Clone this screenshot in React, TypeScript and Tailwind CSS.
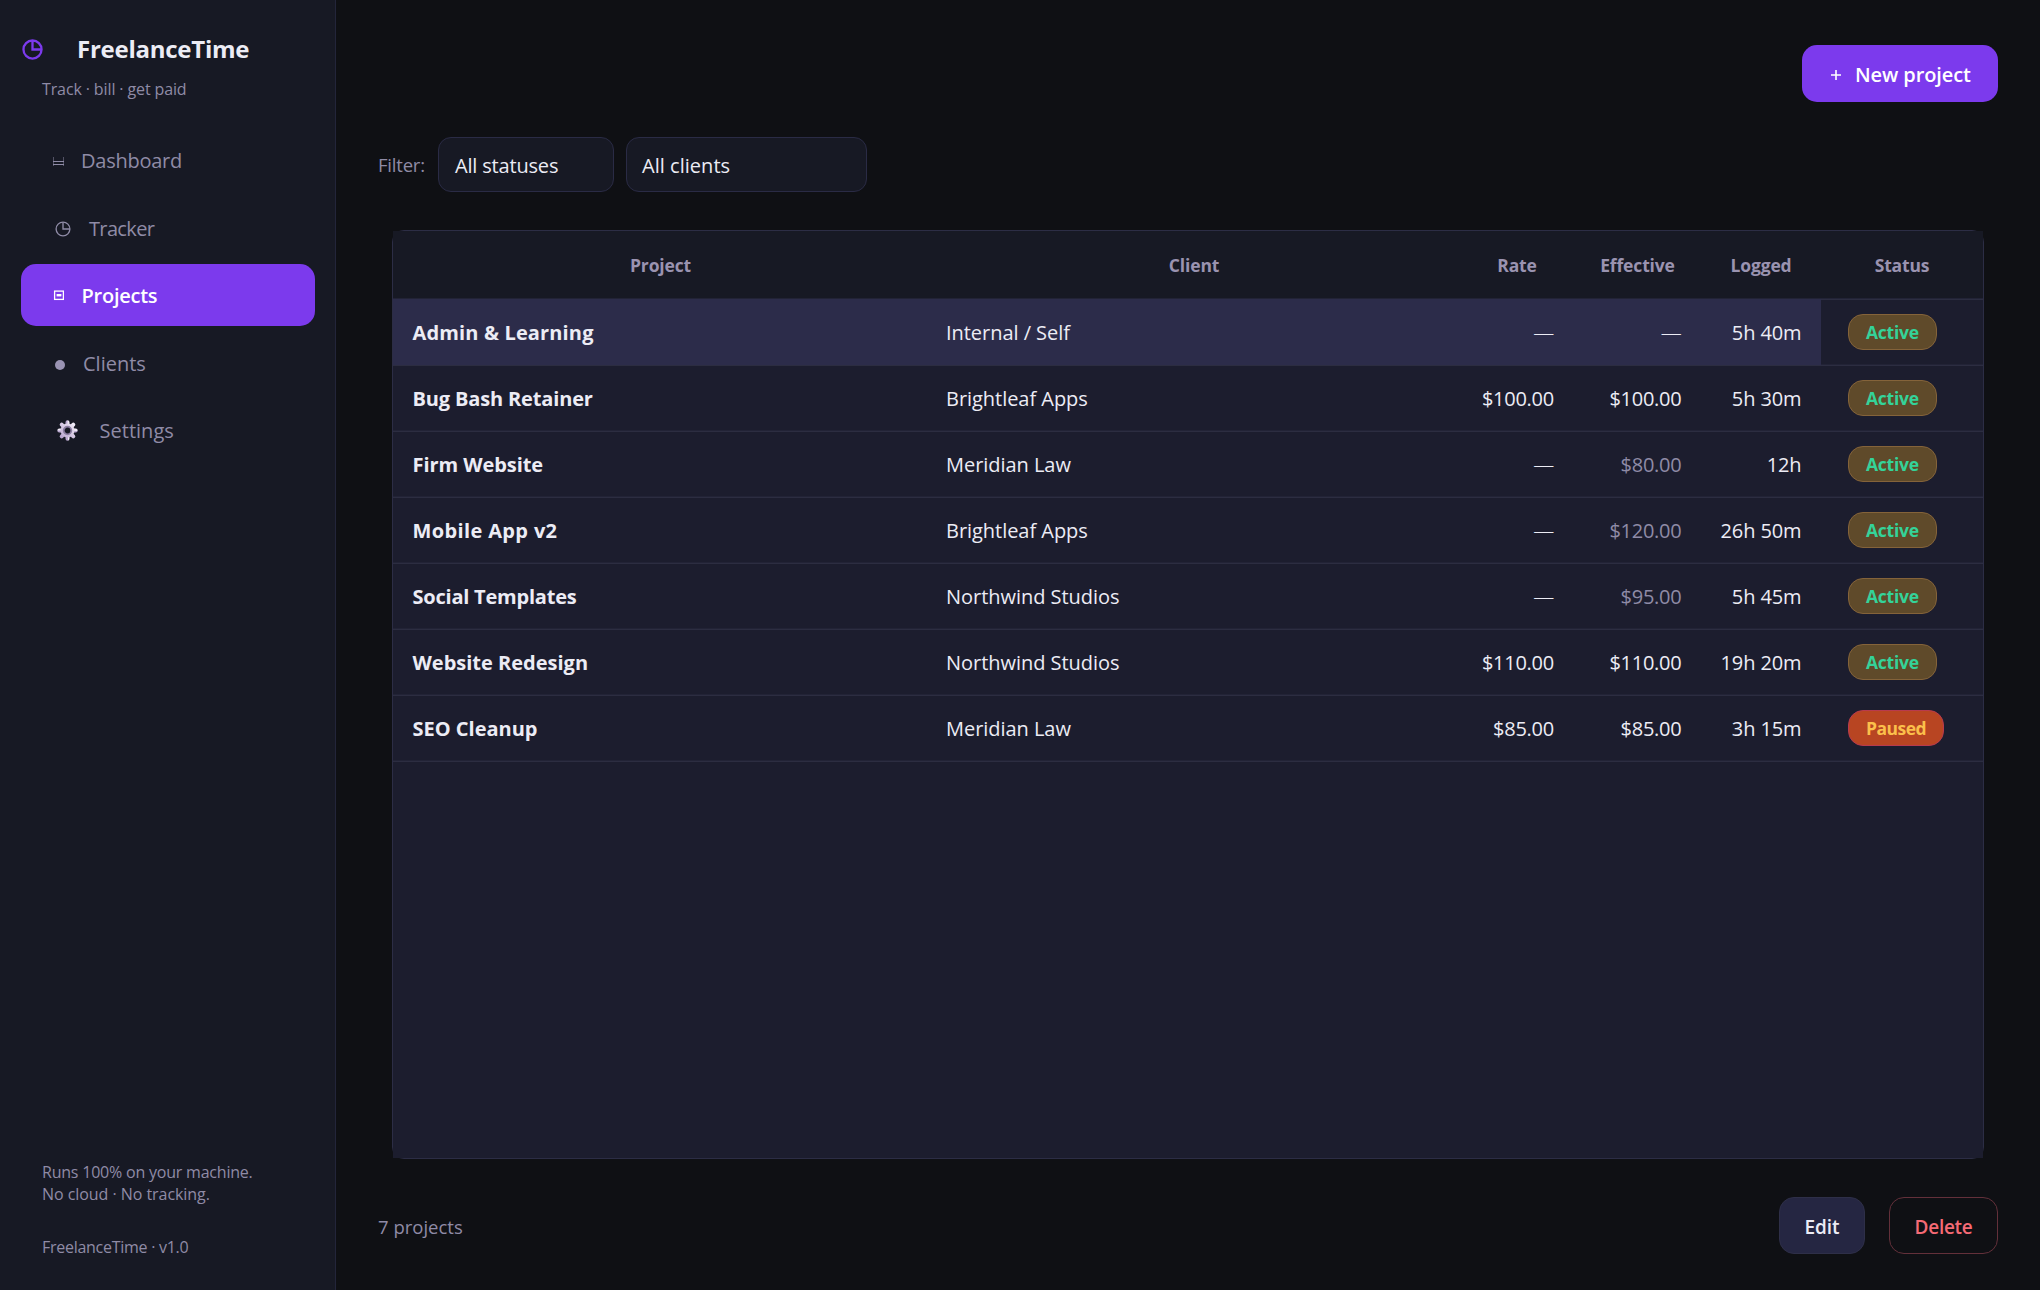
import type { ReactNode } from "react";
import clsx from "clsx";

type Status = "Active" | "Paused";

type Project = {
  name: string;
  tracking: string;
  client: string;
  rate: string;
  effective: string;
  inherited?: boolean;
  logged: string;
  status: Status;
};

const PROJECTS: Project[] = [
  { name: "Admin & Learning", tracking: "tracking-[0.15px]", client: "Internal / Self", rate: "—", effective: "—", logged: "5h 40m", status: "Active" },
  { name: "Bug Bash Retainer", tracking: "tracking-[-0.15px]", client: "Brightleaf Apps", rate: "$100.00", effective: "$100.00", logged: "5h 30m", status: "Active" },
  { name: "Firm Website", tracking: "tracking-[-0.06px]", client: "Meridian Law", rate: "—", effective: "$80.00", inherited: true, logged: "12h", status: "Active" },
  { name: "Mobile App v2", tracking: "tracking-[0.36px]", client: "Brightleaf Apps", rate: "—", effective: "$120.00", inherited: true, logged: "26h 50m", status: "Active" },
  { name: "Social Templates", tracking: "tracking-[-0.22px]", client: "Northwind Studios", rate: "—", effective: "$95.00", inherited: true, logged: "5h 45m", status: "Active" },
  { name: "Website Redesign", tracking: "tracking-normal", client: "Northwind Studios", rate: "$110.00", effective: "$110.00", logged: "19h 20m", status: "Active" },
  { name: "SEO Cleanup", tracking: "tracking-normal", client: "Meridian Law", rate: "$85.00", effective: "$85.00", logged: "3h 15m", status: "Paused" },
];

const COLUMNS = ["Project", "Client", "Rate", "Effective", "Logged", "Status"];

const GRID = "grid grid-cols-[535px_532px_114px_127px_120px_162px]";

const ClockIcon = ({ size, stroke }: { size: number; stroke: number }) => (
  <svg width={size} height={size} viewBox="0 0 20 20" fill="none" stroke="currentColor" strokeWidth={stroke}>
    <circle cx="10" cy="10" r="8.6" />
    <path d="M10 1.6V10H18.4" />
  </svg>
);

const DashboardIcon = () => (
  <svg width="11" height="11" viewBox="0 0 11 11" fill="currentColor" shapeRendering="crispEdges">
    <rect x="0" y="1" width="1" height="9" opacity="0.5" />
    <rect x="10" y="1" width="1" height="9" opacity="0.5" />
    <rect x="0" y="5" width="11" height="1" />
    <rect x="0" y="8" width="11" height="1" />
  </svg>
);

const ProjectsIcon = () => (
  <svg width="11" height="11" viewBox="0 0 11 11" fill="none" stroke="currentColor">
    <rect x="1.6" y="1.1" width="8.8" height="8.3" strokeWidth="1.3" />
    <path d="M3.6 5.2h4.8" strokeWidth="2.4" />
  </svg>
);

const GearIcon = () => (
  <svg width="21" height="21" viewBox="0 0 21 21">
    <defs>
      <linearGradient id="gear" x1="1" y1="0" x2="0" y2="1">
        <stop offset="0" stopColor="#f0eaf6" />
        <stop offset="1" stopColor="#b9a6cf" />
      </linearGradient>
    </defs>
    {/* teeth are nudged off-axis so the gradient box never collapses to zero */}
    <g stroke="url(#gear)" strokeWidth="4" strokeLinecap="round">
      <path d="M10.5 2.3L10.51 18.7" />
      <path d="M2.3 10.5L18.7 10.51" />
      <path d="M4.7 4.7L16.3 16.3" />
      <path d="M16.3 4.7L4.7 16.3" />
    </g>
    <circle cx="10.5" cy="10.5" r="7" fill="url(#gear)" />
    <circle cx="10.5" cy="10.5" r="3.8" fill="#171924" stroke="#8d7fa3" strokeWidth="1.8" />
  </svg>
);

const NavItem = ({ icon, label, active, className }: { icon: ReactNode; label: string; active?: boolean; className: string }) => (
  <a
    className={clsx(
      "flex h-[61.5px] items-center rounded-[15px] pl-8 text-[20px]",
      active ? "bg-[#7c3aed] font-semibold text-white" : "text-[#8f8ba6]",
      className
    )}
  >
    {icon}
    <span>{label}</span>
  </a>
);

const Sidebar = () => (
  <aside className="flex w-[336px] shrink-0 flex-col border-r border-[#23253a] bg-[#171924] pt-7 pr-5 pb-8 pl-[21px] text-[#8f8ba6]">
    <div className="flex h-[42px] items-center">
      <span className="pl-px text-[#7c3aed]">
        <ClockIcon size={21} stroke={2.2} />
      </span>
      <h1 className="ml-[34px] text-[24px] font-bold tracking-[-0.25px] text-[#ececf5]">FreelanceTime</h1>
    </div>
    <p className="mt-[7px] pl-[21px] text-[16px] leading-6 tracking-[-0.12px]">Track · bill · get paid</p>

    <nav className="mt-7 flex flex-col gap-1.5">
      <NavItem label="Dashboard" className="gap-[17px] pt-[3px] tracking-[-0.25px]" icon={<DashboardIcon />} />
      <NavItem label="Tracker" className="gap-[18.5px] pt-[3px] tracking-[-0.65px]" icon={<span className="pl-[1.5px]"><ClockIcon size={16} stroke={1.7} /></span>} />
      <NavItem label="Projects" active className="gap-[17.5px] pt-0.5 tracking-[-0.25px]" icon={<ProjectsIcon />} />
      <NavItem
        label="Clients"
        className="gap-[18px] pt-[3px] tracking-normal"
        icon={<span className="mt-[3px] ml-[2px] size-2.5 rounded-full bg-[#9a93b3]" />}
      />
      <NavItem label="Settings" className="gap-[21.5px] pt-0.5 tracking-[0.02px]" icon={<span className="pl-1"><GearIcon /></span>} />
    </nav>

    <div className="mt-auto pl-[21px] text-[16px] leading-[22px]">
      <p className="tracking-[-0.21px]">Runs 100% on your machine.</p>
      <p className="tracking-[-0.05px]">No cloud · No tracking.</p>
      <p className="mt-[31px] tracking-[-0.27px]">FreelanceTime · v1.0</p>
    </div>
  </aside>
);

const StatusBadge = ({ status }: { status: Status }) => (
  <span
    className={clsx(
      "flex h-9 items-center rounded-[15px] border pl-[17px] text-[17.5px] font-bold",
      status === "Active"
        ? "w-[88.5px] border-[#84633a] bg-[#5f4a2a] tracking-[-0.25px] text-[#34d399]"
        : "w-[96px] border-[#b83a4e] bg-[#b84522] tracking-[-0.5px] text-[#fbbf4b]"
    )}
  >
    <span className="pt-px">{status}</span>
  </span>
);

const Amount = ({ value }: { value: string }) =>
  value === "—" ? <span className="text-[21px] font-light">—</span> : <span>{value}</span>;

const ProjectRow = ({ project, selected }: { project: Project; selected: boolean }) => {
  const cell = clsx(
    "flex h-[66px] items-center border-y pt-0.5",
    selected ? "border-[#2c2c4a] bg-[#2c2c4a]" : "border-t-[#2c2d41] border-b-[#222336]"
  );

  return (
    <div className={clsx(GRID, "text-[20px] text-[#ececf5]")}>
      <div className={clsx(cell, "pl-[19.5px] font-bold", project.tracking)}>{project.name}</div>
      <div className={clsx(cell, "pl-[18px] tracking-[-0.04px]")}>{project.client}</div>
      <div className={clsx(cell, "justify-end pr-5 tracking-[-0.25px]")}>
        <Amount value={project.rate} />
      </div>
      <div className={clsx(cell, "justify-end pr-[19.5px] tracking-[-0.25px]", project.inherited && "text-[#8f8ba6]")}>
        <Amount value={project.effective} />
      </div>
      <div className={clsx(cell, "justify-end pr-[19.5px] tracking-[-0.1px]")}>{project.logged}</div>
      <div className="flex h-[66px] items-center border-y border-t-[#2c2d41] border-b-[#222336] pl-[27px]">
        <StatusBadge status={project.status} />
      </div>
    </div>
  );
};

const ProjectTable = () => (
  <section className="ml-3.5 h-[929px] w-[1592px] rounded-xl border border-[#2c2d45]">
    <div className="flex h-full flex-col bg-[#1c1d2e]">
      <div className={clsx(GRID, "h-[68px] items-center border-b border-[#222336] bg-[#171924] text-[17.5px] font-bold tracking-[-0.15px] text-[#9a93b0]")}>
        {COLUMNS.map((name) => (
          <span key={name} className="pt-0.5 text-center">
            {name}
          </span>
        ))}
      </div>
      {PROJECTS.map((project, i) => (
        <ProjectRow key={project.name} project={project} selected={i === 0} />
      ))}
      <div className="flex-1 border-t border-[#2c2d41]" />
    </div>
  </section>
);

export default function App() {
  return (
    <div className="flex h-[1290px] w-[2040px] overflow-hidden bg-[#0f1014] font-['Open_Sans','Noto_Sans',sans-serif]">
      <Sidebar />

      <main className="flex flex-1 flex-col pt-[45px] pr-[42px] pl-[42px]">
        <button className="flex h-[57px] w-[196px] items-center self-end rounded-[15px] bg-[#7c3aed] pt-0.5 pl-[27px] text-[20px] font-semibold text-white">
          <svg width="14" height="14" viewBox="0 0 14 14" stroke="currentColor" strokeWidth="1.6">
            <path d="M2 7h10M7 2v10" />
          </svg>
          <span className="ml-3 tracking-[-0.1px]">New project</span>
        </button>

        <div className="mt-[35px] flex h-[55px] items-center text-[20px] text-[#ececf5]">
          <span className="w-[60px] text-[18.5px] tracking-[-0.2px] text-[#8f8ba6]">Filter:</span>
          <div className="flex h-full w-[175.5px] items-center rounded-[13px] border border-[#2a2b45] bg-[#171924] pt-0.5 pl-4 tracking-[-0.18px]">
            All statuses
          </div>
          <div className="ml-[12.5px] flex h-full w-[241px] items-center rounded-[13px] border border-[#2a2b45] bg-[#171924] pt-0.5 pl-[15px] tracking-[0.03px]">
            All clients
          </div>
        </div>

        <div className="mt-[38px]">
          <ProjectTable />
        </div>

        <div className="mt-[38px] flex h-[57px] items-center">
          <span className="pt-0.5 text-[18.5px] text-[#8f8ba6]">7 projects</span>
          <button className="mr-6 ml-auto h-full w-[86px] rounded-[15px] border border-[#2e2f48] bg-[#252642] pt-[3px] text-[19px] font-semibold text-[#ececf5]">
            Edit
          </button>
          <button className="h-full w-[109px] rounded-[15px] border border-[#63303a] pt-[3px] text-[19px] font-semibold tracking-[-0.3px] text-[#f56a75]">
            Delete
          </button>
        </div>
      </main>
    </div>
  );
}
